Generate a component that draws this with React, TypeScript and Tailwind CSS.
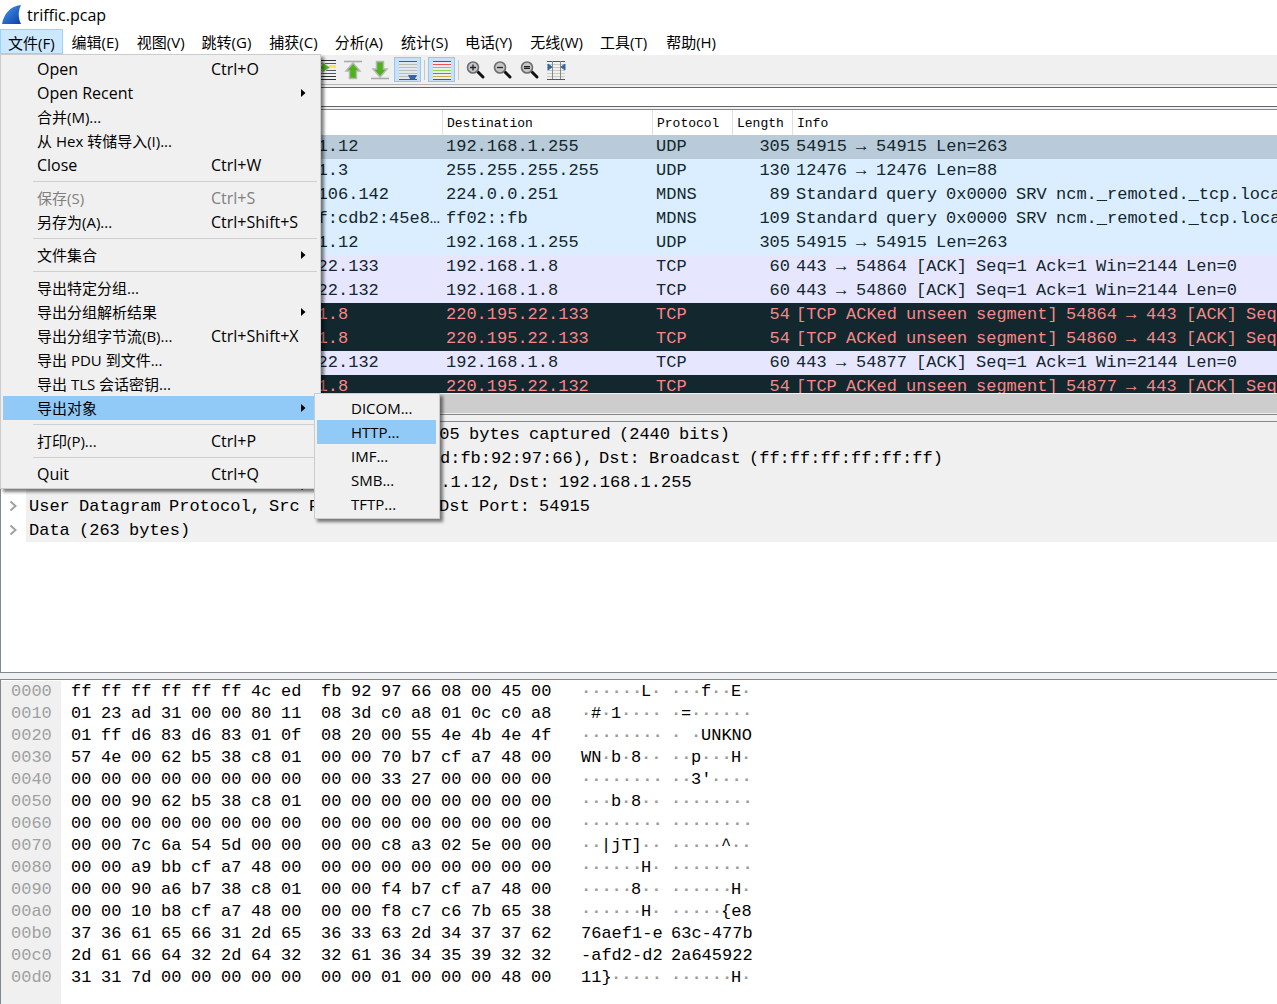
import React from 'react';

const UI_FONT = 'font-["Open_Sans","Noto_Sans_CJK_SC",sans-serif]';
const MONO_FONT = 'font-["Liberation_Mono",monospace]';
const CELL_WIDTH = 10;

const menus = ['编辑(E)', '视图(V)', '跳转(G)', '捕获(C)', '分析(A)', '统计(S)', '电话(Y)', '无线(W)', '工具(T)', '帮助(H)'];

interface MenuEntry {
  label?: string;
  shortcut?: string;
  submenu?: boolean;
  disabled?: boolean;
  active?: boolean;
}

// an entry without a label is a separator
const fileMenu: MenuEntry[] = [
  { label: 'Open', shortcut: 'Ctrl+O' },
  { label: 'Open Recent', submenu: true },
  { label: '合并(M)...' },
  { label: '从 Hex 转储导入(I)...' },
  { label: 'Close', shortcut: 'Ctrl+W' },
  {},
  { label: '保存(S)', shortcut: 'Ctrl+S', disabled: true },
  { label: '另存为(A)...', shortcut: 'Ctrl+Shift+S' },
  {},
  { label: '文件集合', submenu: true },
  {},
  { label: '导出特定分组...' },
  { label: '导出分组解析结果', submenu: true },
  { label: '导出分组字节流(B)...', shortcut: 'Ctrl+Shift+X' },
  { label: '导出 PDU 到文件...' },
  { label: '导出 TLS 会话密钥...' },
  { label: '导出对象', submenu: true, active: true },
  {},
  { label: '打印(P)...', shortcut: 'Ctrl+P' },
  {},
  { label: 'Quit', shortcut: 'Ctrl+Q' },
];

const exportMenu = ['DICOM...', 'HTTP...', 'IMF...', 'SMB...', 'TFTP...'];

interface Packet {
  no: number;
  time: string;
  src: string;
  dst: string;
  protocol: string;
  length: number;
  info: string;
  kind: 'selected' | 'udp' | 'tcp' | 'bad';
}

const packets: Packet[] = [
  { no: 1, time: '0.000000', src: '192.168.1.12', dst: '192.168.1.255', protocol: 'UDP', length: 305, info: '54915 → 54915 Len=263', kind: 'selected' },
  { no: 2, time: '0.204811', src: '192.168.1.3', dst: '255.255.255.255', protocol: 'UDP', length: 130, info: '12476 → 12476 Len=88', kind: 'udp' },
  { no: 3, time: '0.512034', src: '169.254.106.142', dst: '224.0.0.251', protocol: 'MDNS', length: 89, info: 'Standard query 0x0000 SRV ncm._remoted._tcp.local', kind: 'udp' },
  { no: 4, time: '0.512466', src: 'fe80::81f:cdb2:45e8…', dst: 'ff02::fb', protocol: 'MDNS', length: 109, info: 'Standard query 0x0000 SRV ncm._remoted._tcp.local', kind: 'udp' },
  { no: 5, time: '1.000379', src: '192.168.1.12', dst: '192.168.1.255', protocol: 'UDP', length: 305, info: '54915 → 54915 Len=263', kind: 'udp' },
  { no: 6, time: '1.321507', src: '220.195.22.133', dst: '192.168.1.8', protocol: 'TCP', length: 60, info: '443 → 54864 [ACK] Seq=1 Ack=1 Win=2144 Len=0', kind: 'tcp' },
  { no: 7, time: '1.321508', src: '220.195.22.132', dst: '192.168.1.8', protocol: 'TCP', length: 60, info: '443 → 54860 [ACK] Seq=1 Ack=1 Win=2144 Len=0', kind: 'tcp' },
  { no: 8, time: '1.321558', src: '192.168.1.8', dst: '220.195.22.133', protocol: 'TCP', length: 54, info: '[TCP ACKed unseen segment] 54864 → 443 [ACK] Seq=1', kind: 'bad' },
  { no: 9, time: '1.321602', src: '192.168.1.8', dst: '220.195.22.133', protocol: 'TCP', length: 54, info: '[TCP ACKed unseen segment] 54860 → 443 [ACK] Seq=1', kind: 'bad' },
  { no: 10, time: '1.420913', src: '220.195.22.132', dst: '192.168.1.8', protocol: 'TCP', length: 60, info: '443 → 54877 [ACK] Seq=1 Ack=1 Win=2144 Len=0', kind: 'tcp' },
  { no: 11, time: '1.420951', src: '192.168.1.8', dst: '220.195.22.132', protocol: 'TCP', length: 54, info: '[TCP ACKed unseen segment] 54877 → 443 [ACK] Seq=1', kind: 'bad' },
];

const details = [
  'Frame 1: 305 bytes on wire (2440 bits), 305 bytes captured (2440 bits)',
  'Ethernet II, Src: ASUSTekC_92:97:66 (4c:ed:fb:92:97:66), Dst: Broadcast (ff:ff:ff:ff:ff:ff)',
  'Internet Protocol Version 4, Src: 192.168.1.12, Dst: 192.168.1.255',
  'User Datagram Protocol, Src Port: 54915, Dst Port: 54915',
  'Data (263 bytes)',
];

const dump = [
  ['0000', 'ff ff ff ff ff ff 4c ed  fb 92 97 66 08 00 45 00', '······L· ···f··E·'],
  ['0010', '01 23 ad 31 00 00 80 11  08 3d c0 a8 01 0c c0 a8', '·#·1···· ·=······'],
  ['0020', '01 ff d6 83 d6 83 01 0f  08 20 00 55 4e 4b 4e 4f', '········ · ·UNKNO'],
  ['0030', '57 4e 00 62 b5 38 c8 01  00 00 70 b7 cf a7 48 00', 'WN·b·8·· ··p···H·'],
  ['0040', '00 00 00 00 00 00 00 00  00 00 33 27 00 00 00 00', "········ ··3'····"],
  ['0050', '00 00 90 62 b5 38 c8 01  00 00 00 00 00 00 00 00', '···b·8·· ········'],
  ['0060', '00 00 00 00 00 00 00 00  00 00 00 00 00 00 00 00', '········ ········'],
  ['0070', '00 00 7c 6a 54 5d 00 00  00 00 c8 a3 02 5e 00 00', '··|jT]·· ·····^··'],
  ['0080', '00 00 a9 bb cf a7 48 00  00 00 00 00 00 00 00 00', '······H· ········'],
  ['0090', '00 00 90 a6 b7 38 c8 01  00 00 f4 b7 cf a7 48 00', '·····8·· ······H·'],
  ['00a0', '00 00 10 b8 cf a7 48 00  00 00 f8 c7 c6 7b 65 38', '······H· ·····{e8'],
  ['00b0', '37 36 61 65 66 31 2d 65  36 33 63 2d 34 37 37 62', '76aef1-e 63c-477b'],
  ['00c0', '2d 61 66 64 32 2d 64 32  32 61 36 34 35 39 32 32', '-afd2-d2 2a645922'],
  ['00d0', '31 31 7d 00 00 00 00 00  00 00 01 00 00 00 48 00', '11}····· ······H·'],
];

const getRowColor = (kind: Packet['kind']) => {
  switch (kind) {
    case 'selected': return 'bg-[#b9cbd9] text-[#12272e]';
    case 'udp': return 'bg-[#daeeff] text-[#12272e]';
    case 'tcp': return 'bg-[#e7e6ff] text-[#12272e]';
    case 'bad': return 'bg-[#12272e] text-[#f78787]';
  }
};

// Starts every word (and every run of dots) on the character grid
function MonoText({ text }: { text: string }) {
  const words = text.match(/·+ *|[^·\s]+ *| +/g) ?? [];
  return (
    <>
      {words.map((word, i) => (
        <span
          key={i}
          className={`inline-block whitespace-pre align-top ${word[0] === '·' ? 'font-bold text-[#9a9a9a]' : ''}`}
          style={{ width: word.length * CELL_WIDTH }}
        >
          {word}
        </span>
      ))}
    </>
  );
}

function FileMenu() {
  return (
    <ul role="menu" className="absolute left-0 top-full z-10 w-[321px] border border-[#ccc] bg-[#f0f0f0] p-[2px] shadow-[3px_3px_3px_rgba(0,0,0,0.5)]">
      {fileMenu.map((item, i) =>
        !item.label ? (
          <li key={i} role="separator" className="flex h-[9px] items-center pl-[30px] pr-px">
            <div className="h-px w-full bg-[#d0d0d0]" />
          </li>
        ) : (
          <li key={i} className="relative">
            <button
              role="menuitem"
              disabled={item.disabled}
              className={`flex h-6 w-full items-center pl-[34px] text-left ${item.active ? 'bg-[#91c9f7]' : ''} ${item.disabled ? 'text-[#808080]' : ''}`}
            >
              <span className={`w-[174px] whitespace-nowrap ${/^[A-Z]/.test(item.label) ? 'text-[16px]' : ''}`}>{item.label}</span>
              <span className="flex-1 whitespace-nowrap text-[16px]">{item.shortcut}</span>
              {item.submenu && (
                <svg className="mr-3 h-2 w-[5px]" viewBox="0 0 5 8"><path d="M0 0l4.500 4L0 8z" /></svg>
              )}
            </button>
            {item.active && <ExportMenu />}
          </li>
        )
      )}
    </ul>
  );
}

function ExportMenu() {
  return (
    <ul role="menu" className="absolute left-[311px] -top-[3px] w-[126px] border border-[#ccc] bg-[#f0f0f0] p-[2px] pr-[3px] shadow-[3px_3px_3px_rgba(0,0,0,0.5)]">
      {exportMenu.map((label) => (
        <li key={label}>
          <button role="menuitem" className={`flex h-6 w-full items-center pl-[34px] ${label === 'HTTP...' ? 'bg-[#91c9f7]' : ''}`}>{label}</button>
        </li>
      ))}
    </ul>
  );
}

function ToolButton({ label, checked, children }: { label: string; checked?: boolean; children: React.ReactNode }) {
  return (
    <button
      aria-label={label}
      className={`flex h-[25px] w-[27px] items-center justify-center border ${checked ? 'border-[#90c8f6] bg-[#c9e0f7]' : 'border-transparent'}`}
    >
      <svg className="h-5 w-5" viewBox="0 0 20 20">{children}</svg>
    </button>
  );
}

function Lines({ ys, color = '#55585a' }: { ys: number[]; color?: string }) {
  return <>{ys.map((y) => <path key={y} d={`M1 ${y}.5h18`} stroke={color} />)}</>;
}

function Magnifier({ sign }: { sign: string }) {
  return (
    <>
      <path d="M12 12l5 5" stroke="#111" strokeWidth="3" strokeLinecap="round" />
      <circle cx="7" cy="7.500" r="5.500" fill="#c4c6c7" stroke="#6a6c6e" strokeWidth="1.600" />
      <path d={sign} stroke="#222" strokeWidth="1.300" />
    </>
  );
}

function Toolbar() {
  return (
    <div className="flex h-[31px] shrink-0 items-center border-t border-b border-t-white border-b-[#b4b4b4] bg-[#f0f0f0] pl-[313px]">
      <ToolButton label="转到分组">
        <Lines ys={[0, 16, 19]} color="#2e3436" />
        <Lines ys={[3, 10, 13]} />
        <path d="M12 5h7v3h-7z" fill="#fce94f" />
        <path d="M0 6h5V2l8 5.500-8 5.500V9H0z" fill="#4eb31b" stroke="#c9cbc7" strokeWidth="1" />
      </ToolButton>
      <ToolButton label="首个分组">
        <path d="M0 1.500h18" stroke="#a9aba8" strokeWidth="1.600" />
        <path d="M9 3l7 8h-3.500v7.500h-7V11H2z" fill="#4eb31b" stroke="#b6b8b4" strokeWidth="1.500" />
      </ToolButton>
      <ToolButton label="最新分组">
        <path d="M0 18.500h18" stroke="#a9aba8" strokeWidth="1.600" />
        <path d="M9 17L2 9h3.500V1.500h7V9H16z" fill="#4eb31b" stroke="#b6b8b4" strokeWidth="1.500" />
      </ToolButton>
      <ToolButton label="自动滚动" checked>
        <rect x="1" y="2" width="18" height="17" fill="#dfe8ee" />
        <Lines ys={[1, 19]} />
        <Lines ys={[4, 7, 10, 13, 16]} color="#b9bdb6" />
        <path d="M10 15h9l-2 4h-5z" fill="#3465a4" />
      </ToolButton>
      <div className="mx-[3px] h-5 w-px bg-[#c8c8c8]" />
      <ToolButton label="着色" checked>
        <rect x="1" y="2" width="18" height="17" fill="#e8eef2" />
        <Lines ys={[1, 19]} />
        <path d="M1 4.500h18" stroke="#ef5050" />
        <path d="M1 7.500h18" stroke="#8fb0d8" />
        <path d="M1 10.500h18" stroke="#8fd650" />
        <path d="M1 13.500h18" stroke="#8a70a0" />
        <path d="M1 16.500h18" stroke="#c8ae40" />
      </ToolButton>
      <div className="mx-[3px] h-5 w-px bg-[#c8c8c8]" />
      <ToolButton label="放大"><Magnifier sign="M4 7.500h6M7 4.500v6" /></ToolButton>
      <ToolButton label="缩小"><Magnifier sign="M4 7.500h6" /></ToolButton>
      <ToolButton label="正常大小"><Magnifier sign="M4 6.700h6M4 8.300h6" /></ToolButton>
      <ToolButton label="调整列宽">
        <path d="M0 1.500h18M0 19.500h18" stroke="#55585a" />
        <path d="M0 4.500h18M0 7.500h18M0 10.500h18M0 13.500h18M0 16.500h18" stroke="#c8cac6" />
        <path d="M5.500 1v18M13.500 1v18" stroke="#888a85" />
        <path d="M1 4l4 3-4 3zM18 4l-4 3 4 3z" fill="#3465a4" stroke="#3465a4" />
      </ToolButton>
    </div>
  );
}

function PacketList() {
  return (
    <section className="flex min-h-0 flex-[304_1_0] flex-col border-y border-l border-[#828790] bg-white">
      <div className="min-h-0 flex-1 overflow-hidden">
        <table className={`w-full table-fixed border-collapse text-[17px] leading-6 ${MONO_FONT}`}>
          <colgroup>
            <col className="w-[81px]" />
            <col className="w-[150px]" />
            <col className="w-[210px]" />
            <col className="w-[210px]" />
            <col className="w-[80px]" />
            <col className="w-[60px]" />
            <col />
          </colgroup>
          <thead>
            <tr className="h-[25px] text-[13px]">
              {['No.', 'Time', 'Source', 'Destination', 'Protocol', 'Length', 'Info'].map((name) => (
                <th key={name} className="p-0 text-left font-normal">
                  <div className="h-[25px] border-l border-[#e0e0e0] pl-1 leading-[27px]">{name}</div>
                </th>
              ))}
            </tr>
          </thead>
          <tbody>
            {packets.map((p) => (
              <tr key={p.no} className={`h-6 whitespace-nowrap ${getRowColor(p.kind)}`}>
                <td className="p-0 pl-1">{p.no}</td>
                <td className="p-0 pl-1">{p.time}</td>
                <td className="p-0 pl-1"><MonoText text={p.src} /></td>
                <td className="p-0 pl-1"><MonoText text={p.dst} /></td>
                <td className="p-0 pl-1">{p.protocol}</td>
                <td className="p-0 pr-[2px] text-right">{p.length}</td>
                <td className="overflow-hidden p-0 pl-1"><MonoText text={p.info} /></td>
              </tr>
            ))}
          </tbody>
        </table>
      </div>
      <div className="h-[21px] shrink-0 border-y border-[#f0f0f0] bg-[#cdcdcd]" />
    </section>
  );
}

function PacketDetails() {
  return (
    <section className="min-h-0 flex-[251_1_0] overflow-hidden border-y border-l border-[#828790] bg-white">
      <ul className={`text-[17px] leading-[26px] ${MONO_FONT}`}>
        {details.map((line) => (
          <li key={line} className="flex h-6 items-center">
            <svg className="mx-2 h-3 w-[9px] shrink-0" viewBox="0 0 9 12">
              <path d="M1.500 1.500L6.500 6l-5 4.500" fill="none" stroke="#a0a0a0" strokeWidth="2" />
            </svg>
            <span className="h-6 flex-1 whitespace-nowrap bg-[#f0f0f0] pl-[3px]"><MonoText text={line} /></span>
          </li>
        ))}
      </ul>
    </section>
  );
}

function HexDump() {
  return (
    <section className={`flex min-h-0 flex-[323_1_0] overflow-hidden border-t border-l border-[#828790] bg-white pt-px text-[17px] leading-[22px] whitespace-nowrap ${MONO_FONT}`}>
      <div className="w-[60px] bg-[#f0f0f0] pl-[10px] text-[#a0a0a0]">
        {dump.map(([offset]) => <div key={offset} className="h-[22px]">{offset}</div>)}
      </div>
      <div className="pl-[10px]">
        {dump.map(([offset, hex]) => <div key={offset} className="h-[22px]"><MonoText text={hex} /></div>)}
      </div>
      <div className="pl-[30px]">
        {dump.map(([offset, , ascii]) => (
          <div key={offset} className="h-[22px]"><MonoText text={ascii} /></div>
        ))}
      </div>
    </section>
  );
}

export default function App() {
  return (
    <div className={`flex h-screen flex-col overflow-hidden bg-[#f0f0f0] text-[15px] text-black ${UI_FONT}`}>
      <header className="flex h-[29px] shrink-0 items-center gap-[5px] bg-white pl-[2px]">
        <svg className="h-5 w-5" viewBox="0 0 20 20">
          <defs>
            <linearGradient id="fin" x1="0" y1="0" x2="1" y2="1">
              <stop offset="0" stopColor="#4a9bee" />
              <stop offset="1" stopColor="#0a3fa8" />
            </linearGradient>
          </defs>
          <path d="M0 19C2 9 8 1 19 0c-3 6-3 13 0 19z" fill="url(#fin)" />
        </svg>
        <h1 className="text-[16px]">triffic.pcap</h1>
      </header>
      <nav className="relative flex h-[25px] shrink-0 gap-[2px] bg-white">
        <button className="h-[25px] border border-[#99d1ff] bg-[#cce8ff] px-[7px] pt-[2px]">文件(F)</button>
        {menus.map((m) => <button key={m} className="h-[25px] pl-[7px] pr-2 pt-[2px] last-of-type:pl-2 even:pr-[9px]">{m}</button>)}
        <FileMenu />
      </nav>
      <Toolbar />
      <div className="flex h-6 shrink-0 items-center bg-[#f0f0f0]">
        <input aria-label="显示过滤器" className="h-5 w-full border-y border-l border-[#646464] bg-white px-2 outline-none" />
      </div>
      <main className="flex min-h-0 flex-1 flex-col gap-[6px]">
        <PacketList />
        <PacketDetails />
        <HexDump />
      </main>
    </div>
  );
}
